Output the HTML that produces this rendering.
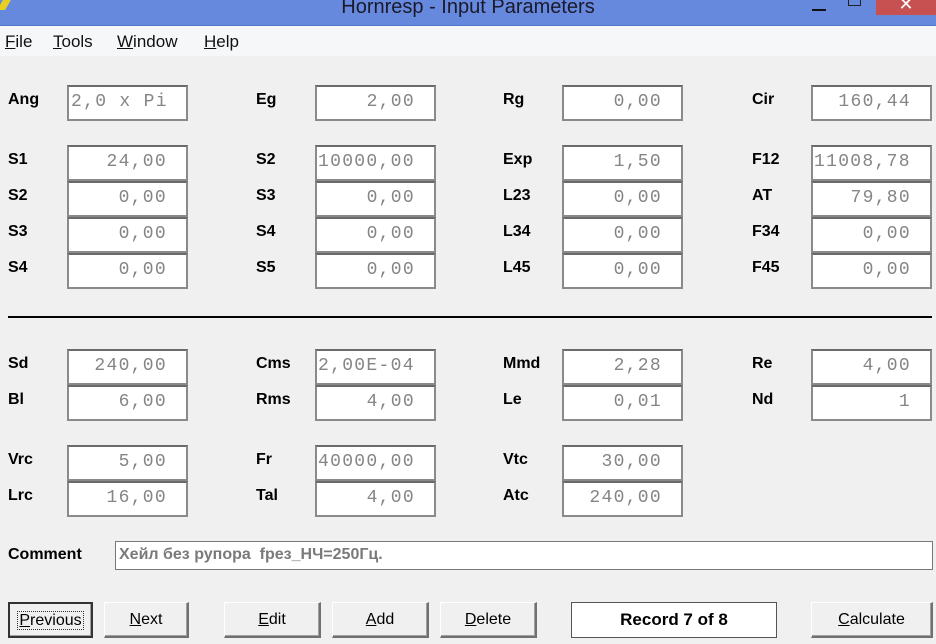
<!DOCTYPE html>
<html><head><meta charset="utf-8"><style>
*{margin:0;padding:0;box-sizing:border-box}
body{width:936px;height:644px;overflow:hidden;background:#f0f0f0;font-family:"Liberation Sans","Noto Sans CJK SC",sans-serif;position:relative}
.tb{position:absolute;left:0;top:0;width:936px;height:26px;background:#6688dd;border-bottom:1px solid #5577cc}
.title{position:absolute;left:0;width:936px;top:-4px;text-align:center;font-size:20px;color:#1a1a2a}
.menu{position:absolute;top:26px;left:0;width:936px;height:30px;background:#f6f7f9}
.menu span{position:absolute;top:6px;font-size:17px;color:#111}
.l{position:absolute;font-weight:bold;font-size:16px;color:#000}
.b{position:absolute;width:121px;height:36px;background:#fff;border:2px solid #8a8a8a;border-top-color:#6a6a6a;font-family:"Liberation Mono",monospace;font-size:18px;letter-spacing:1.3px;color:#858585;text-align:right;padding-right:19px;line-height:31px;white-space:pre}
.btn{position:absolute;top:602px;height:36px;background:#f0f0f0;border:1px solid #fff;border-right:2px solid #707070;border-bottom:2px solid #707070;box-shadow:inset -1px -1px 0 #a0a0a0;font-size:16px;text-align:center;line-height:33px;color:#000}
u{text-decoration:underline}
</style></head><body>
<div class="tb"><div class="title">Hornresp - Input Parameters</div>
<div style="position:absolute;left:0;top:0;width:8px;height:10px;background:#e8d020;transform:skewX(-30deg)"></div>
<div style="position:absolute;left:812px;top:9px;width:14px;height:2px;background:#111"></div>
<div style="position:absolute;left:848px;top:0;width:13px;height:6px;border:1px solid #222;border-top:none"></div>
<div style="position:absolute;left:876px;top:0;width:60px;height:15px;background:#c75050;color:#fff;text-align:center;font-size:18px;line-height:8px">✕</div>
</div>
<div class="menu"><span style="left:5px"><u>F</u>ile</span><span style="left:53px"><u>T</u>ools</span><span style="left:117px"><u>W</u>indow</span><span style="left:204px"><u>H</u>elp</span></div>

<div class="l" style="left:8px;top:91px">Ang</div><div class="b" style="left:67px;top:85px;text-align:left;padding-left:2px">2,0 x Pi</div>
<div class="l" style="left:256px;top:91px">Eg</div><div class="b" style="left:315px;top:85px">2,00</div>
<div class="l" style="left:503px;top:91px">Rg</div><div class="b" style="left:562px;top:85px">0,00</div>
<div class="l" style="left:752px;top:91px">Cir</div><div class="b" style="left:811px;top:85px">160,44</div>

<div class="l" style="left:8px;top:151px">S1</div><div class="b" style="left:67px;top:145px">24,00</div>
<div class="l" style="left:8px;top:187px">S2</div><div class="b" style="left:67px;top:181px">0,00</div>
<div class="l" style="left:8px;top:223px">S3</div><div class="b" style="left:67px;top:217px">0,00</div>
<div class="l" style="left:8px;top:259px">S4</div><div class="b" style="left:67px;top:253px">0,00</div>

<div class="l" style="left:256px;top:151px">S2</div><div class="b" style="left:315px;top:145px;padding-right:0;text-align:left;padding-left:1px">10000,00</div>
<div class="l" style="left:256px;top:187px">S3</div><div class="b" style="left:315px;top:181px">0,00</div>
<div class="l" style="left:256px;top:223px">S4</div><div class="b" style="left:315px;top:217px">0,00</div>
<div class="l" style="left:256px;top:259px">S5</div><div class="b" style="left:315px;top:253px">0,00</div>

<div class="l" style="left:503px;top:151px">Exp</div><div class="b" style="left:562px;top:145px">1,50</div>
<div class="l" style="left:503px;top:187px">L23</div><div class="b" style="left:562px;top:181px">0,00</div>
<div class="l" style="left:503px;top:223px">L34</div><div class="b" style="left:562px;top:217px">0,00</div>
<div class="l" style="left:503px;top:259px">L45</div><div class="b" style="left:562px;top:253px">0,00</div>

<div class="l" style="left:752px;top:151px">F12</div><div class="b" style="left:811px;top:145px;padding-right:0;text-align:left;padding-left:1px">11008,78</div>
<div class="l" style="left:752px;top:187px">AT</div><div class="b" style="left:811px;top:181px">79,80</div>
<div class="l" style="left:752px;top:223px">F34</div><div class="b" style="left:811px;top:217px">0,00</div>
<div class="l" style="left:752px;top:259px">F45</div><div class="b" style="left:811px;top:253px">0,00</div>

<div style="position:absolute;left:8px;top:316px;width:924px;height:2px;background:#000"></div>

<div class="l" style="left:8px;top:355px">Sd</div><div class="b" style="left:67px;top:349px">240,00</div>
<div class="l" style="left:8px;top:391px">Bl</div><div class="b" style="left:67px;top:385px">6,00</div>
<div class="l" style="left:256px;top:355px">Cms</div><div class="b" style="left:315px;top:349px;padding-right:0;text-align:left;padding-left:1px">2,00E-04</div>
<div class="l" style="left:256px;top:391px">Rms</div><div class="b" style="left:315px;top:385px">4,00</div>
<div class="l" style="left:503px;top:355px">Mmd</div><div class="b" style="left:562px;top:349px">2,28</div>
<div class="l" style="left:503px;top:391px">Le</div><div class="b" style="left:562px;top:385px">0,01</div>
<div class="l" style="left:752px;top:355px">Re</div><div class="b" style="left:811px;top:349px">4,00</div>
<div class="l" style="left:752px;top:391px">Nd</div><div class="b" style="left:811px;top:385px">1</div>

<div class="l" style="left:8px;top:451px">Vrc</div><div class="b" style="left:67px;top:445px">5,00</div>
<div class="l" style="left:8px;top:487px">Lrc</div><div class="b" style="left:67px;top:481px">16,00</div>
<div class="l" style="left:256px;top:451px">Fr</div><div class="b" style="left:315px;top:445px;padding-right:0;text-align:left;padding-left:1px">40000,00</div>
<div class="l" style="left:256px;top:487px">Tal</div><div class="b" style="left:315px;top:481px">4,00</div>
<div class="l" style="left:503px;top:451px">Vtc</div><div class="b" style="left:562px;top:445px">30,00</div>
<div class="l" style="left:503px;top:487px">Atc</div><div class="b" style="left:562px;top:481px">240,00</div>

<div class="l" style="left:8px;top:546px">Comment</div>
<div style="position:absolute;left:115px;top:541px;width:818px;height:29px;background:#fff;border:1px solid #777;font-size:16px;color:#7a7a7a;padding-left:3px;line-height:26px;font-weight:bold;white-space:pre">Хейл без рупора  fрез_НЧ=250Гц.</div>

<div class="btn" style="left:8px;width:85px;border:2px solid #333"><span style="border:1px dotted #333;padding:0 1px"><u>P</u>revious</span></div>
<div class="btn" style="left:104px;width:85px"><u>N</u>ext</div>
<div class="btn" style="left:224px;width:97px"><u>E</u>dit</div>
<div class="btn" style="left:332px;width:97px"><u>A</u>dd</div>
<div class="btn" style="left:440px;width:97px"><u>D</u>elete</div>
<div style="position:absolute;left:571px;top:602px;width:206px;height:36px;background:#fff;border:1px solid #555;font-weight:bold;font-size:17px;text-align:center;line-height:33px">Record 7 of 8</div>
<div class="btn" style="left:811px;width:122px"><u>C</u>alculate</div>
</body></html>
